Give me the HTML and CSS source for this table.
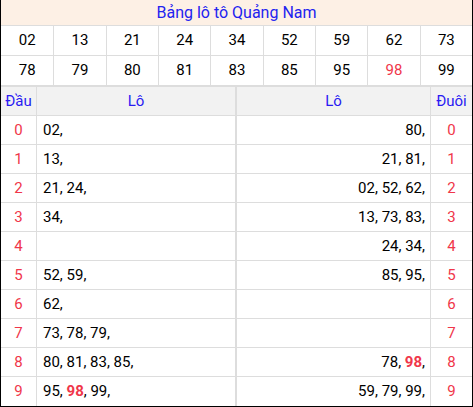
FILE: index.html
```html
<!DOCTYPE html>
<html lang="vi">
<head>
    <meta charset="UTF-8">
    <meta name="viewport" content="width=device-width, initial-scale=1.0">
    <title>Bảng lô tô Quảng Nam</title>
    <link rel="stylesheet" href="styles.css">
</head>
<body>
    <div class="board">
        <div class="board-title">Bảng lô tô Quảng Nam</div>

        <div class="numbers">
            <div class="num">02</div>
            <div class="num">13</div>
            <div class="num">21</div>
            <div class="num">24</div>
            <div class="num">34</div>
            <div class="num">52</div>
            <div class="num">59</div>
            <div class="num">62</div>
            <div class="num">73</div>
            <div class="num">78</div>
            <div class="num">79</div>
            <div class="num">80</div>
            <div class="num">81</div>
            <div class="num">83</div>
            <div class="num">85</div>
            <div class="num">95</div>
            <div class="num hot">98</div>
            <div class="num">99</div>
        </div>

        <div class="lo-table">
            <div class="cell head">Đầu</div>
            <div class="cell head">Lô</div>
            <div class="cell head split">Lô</div>
            <div class="cell head">Đuôi</div>

            <div class="cell digit">0</div>
            <div class="cell lo-left">02,</div>
            <div class="cell lo-right split">80,</div>
            <div class="cell digit">0</div>

            <div class="cell digit">1</div>
            <div class="cell lo-left">13,</div>
            <div class="cell lo-right split">21, 81,</div>
            <div class="cell digit">1</div>

            <div class="cell digit">2</div>
            <div class="cell lo-left">21, 24,</div>
            <div class="cell lo-right split">02, 52, 62,</div>
            <div class="cell digit">2</div>

            <div class="cell digit">3</div>
            <div class="cell lo-left">34,</div>
            <div class="cell lo-right split">13, 73, 83,</div>
            <div class="cell digit">3</div>

            <div class="cell digit">4</div>
            <div class="cell lo-left"></div>
            <div class="cell lo-right split">24, 34,</div>
            <div class="cell digit">4</div>

            <div class="cell digit">5</div>
            <div class="cell lo-left">52, 59,</div>
            <div class="cell lo-right split">85, 95,</div>
            <div class="cell digit">5</div>

            <div class="cell digit">6</div>
            <div class="cell lo-left">62,</div>
            <div class="cell lo-right split"></div>
            <div class="cell digit">6</div>

            <div class="cell digit">7</div>
            <div class="cell lo-left">73, 78, 79,</div>
            <div class="cell lo-right split"></div>
            <div class="cell digit">7</div>

            <div class="cell digit">8</div>
            <div class="cell lo-left">80, 81, 83, 85,</div>
            <div class="cell lo-right split">78, <b class="hot">98</b>,</div>
            <div class="cell digit">8</div>

            <div class="cell digit">9</div>
            <div class="cell lo-left">95, <b class="hot">98</b>, 99,</div>
            <div class="cell lo-right split">59, 79, 99,</div>
            <div class="cell digit">9</div>
        </div>
    </div>
</body>
</html>
```

FILE: styles.css
```css
body {
    margin: 0;
    background-color: #ffffff;
    font-family: 'Roboto', 'Liberation Sans', sans-serif;
    font-size: 15px;
    color: #000;
}

.board {
    width: 471px;
    border-left: 1px solid #000;
    border-right: 1px solid #000;
    border-bottom: 1px solid #000;
}

.board-title {
    height: 25px;
    line-height: 25px;
    text-align: center;
    font-size: 16px;
    color: #2222f0;
    background-color: #fdf0e5;
    border-bottom: 1px solid #dddddd;
}

.numbers {
    display: grid;
    grid-template-columns: repeat(9, 1fr);
    border-bottom: 2px solid #dddddd;
}

.num {
    height: 29px;
    line-height: 29px;
    text-align: center;
    border-left: 1px solid #dddddd;
}

.num:nth-child(9n + 1) {
    border-left: none;
}

.num:nth-child(-n + 9) {
    border-bottom: 1px solid #dddddd;
}

.lo-table {
    display: grid;
    grid-template-columns: 35px 199px 195px 42px;
}

.cell {
    height: 28px;
    line-height: 28px;
    border-bottom: 1px solid #dddddd;
    border-left: 1px solid #dddddd;
    white-space: nowrap;
}

.cell:nth-child(4n + 1) {
    border-left: none;
}

.cell.split {
    border-left: 2px solid #dddddd;
}

.cell:nth-last-child(-n + 4) {
    border-bottom: none;
    height: 29px;
}

.head {
    background-color: #f2f2f2;
    color: #2a1bf2;
    text-align: center;
}

.digit {
    text-align: center;
    color: #f0364a;
}

.lo-left {
    padding-left: 6px;
}

.lo-right {
    text-align: right;
    padding-right: 5px;
}

.hot {
    color: #f0364a;
}
```
